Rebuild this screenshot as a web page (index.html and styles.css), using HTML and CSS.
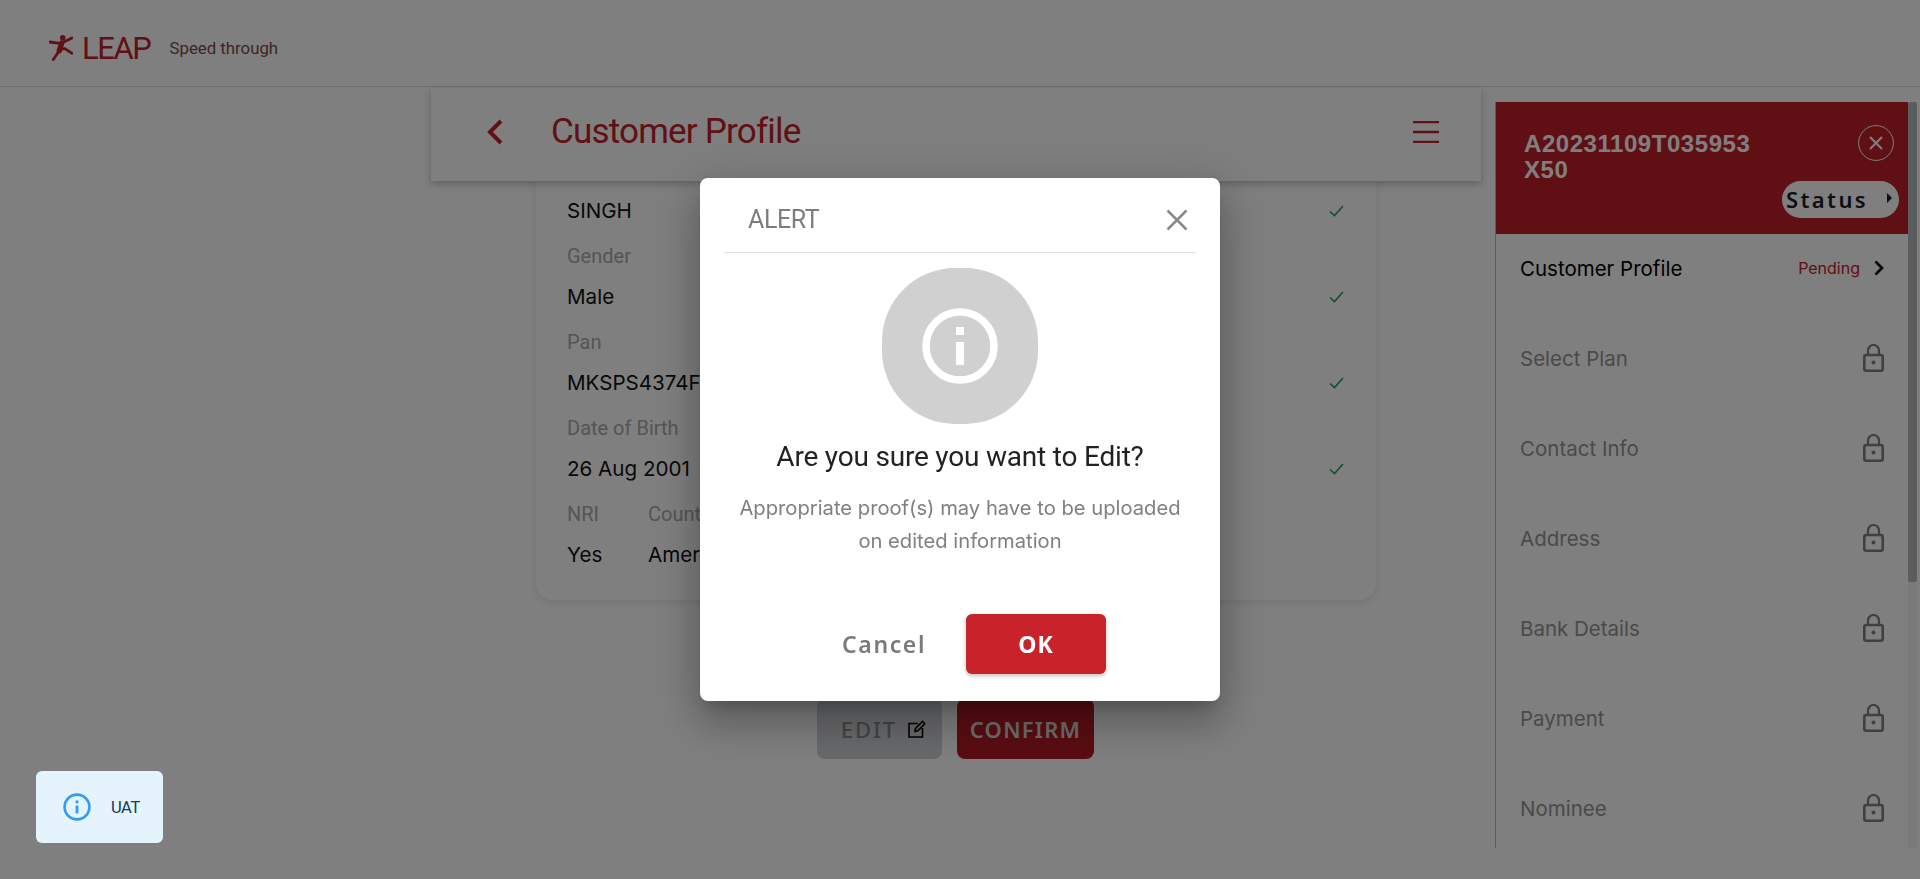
FILE: index.html
```html
<!DOCTYPE html>
<html lang="en">
<head>
  <meta charset="UTF-8" />
  <meta name="viewport" content="width=device-width, initial-scale=1.0" />
  <title>LEAP - Customer Profile</title>
  <link rel="stylesheet" href="styles.css">
</head>
<body>
  <header class="topbar">
    <svg class="logo-icon" viewBox="0 0 24 26" width="24" height="26">
      <circle cx="13.7" cy="2.8" r="2.8" fill="#c4202b"/>
      <path d="M1 7 L11 8.3 M12.7 8 L23 3 M10.3 14 L16 13.7 L23 18.3 M10.3 15.7 L4.3 24.5" fill="none" stroke="#c4202b" stroke-width="2.8" stroke-linecap="round" stroke-linejoin="round"/>
      <path d="M12.7 8 L10.3 15.7" fill="none" stroke="#c4202b" stroke-width="5.4" stroke-linecap="round"/>
    </svg>
    <span class="logo-text">LEAP</span>
    <span class="tagline">Speed through</span>
  </header>

  <div class="layout">
    <main class="content">
      <div class="subheader">
        <svg class="back" viewBox="0 0 16 26" width="16" height="26"><path d="M14 2 L3 13 L14 24" fill="none" stroke="#c4202b" stroke-width="4"/></svg>
        <h1>Customer Profile</h1>
        <svg class="burger" viewBox="0 0 26 22" width="26" height="22"><path d="M0 1 H26 M0 11 H26 M0 21 H26" stroke="#c4202b" stroke-width="2.4"/></svg>
      </div>

      <section class="card">
        <div class="field">
          <div class="value">SINGH</div>
          <svg class="check" viewBox="0 0 15 12" width="15" height="12"><path d="M1 6.5 L5.5 10.5 L14 1" fill="none" stroke="#2a9d5c" stroke-width="1.6"/></svg>
        </div>
        <div class="label">Gender</div>
        <div class="field">
          <div class="value">Male</div>
          <svg class="check" viewBox="0 0 15 12" width="15" height="12"><path d="M1 6.5 L5.5 10.5 L14 1" fill="none" stroke="#2a9d5c" stroke-width="1.6"/></svg>
        </div>
        <div class="label">Pan</div>
        <div class="field">
          <div class="value">MKSPS4374F</div>
          <svg class="check" viewBox="0 0 15 12" width="15" height="12"><path d="M1 6.5 L5.5 10.5 L14 1" fill="none" stroke="#2a9d5c" stroke-width="1.6"/></svg>
        </div>
        <div class="label">Date of Birth</div>
        <div class="field">
          <div class="value">26 Aug 2001</div>
          <svg class="check" viewBox="0 0 15 12" width="15" height="12"><path d="M1 6.5 L5.5 10.5 L14 1" fill="none" stroke="#2a9d5c" stroke-width="1.6"/></svg>
        </div>
        <div class="pair">
          <div class="pair-col">
            <div class="label">NRI</div>
            <div class="value">Yes</div>
          </div>
          <div>
            <div class="label">Country</div>
            <div class="value">America</div>
          </div>
        </div>
      </section>

      <div class="actions">
        <button class="btn-edit">EDIT
          <svg viewBox="0 0 18 18" width="18" height="18"><path d="M10 3.5 H1 V17 H14.5 V8 M7 11.5 L7.5 8.5 L14.5 1.5 L16.8 3.8 L9.8 10.8 Z" fill="none" stroke="#000" stroke-width="1.6"/></svg>
        </button>
        <button class="btn-confirm">CONFIRM</button>
      </div>
    </main>

    <aside class="side">
      <div class="side-head">
        <div class="app-id">A20231109T035953<br>X50</div>
        <svg class="side-close" viewBox="0 0 36 36" width="36" height="36"><circle cx="18" cy="18" r="17.4" fill="none" stroke="#fff" stroke-width="1"/><path d="M12 12 L24 24 M24 12 L12 24" stroke="#fff" stroke-width="2"/></svg>
        <div class="status">Status <i class="status-arrow"></i></div>
      </div>
      <ul class="steps">
        <li class="step active">
          <span>Customer Profile</span>
          <span class="pending">Pending</span>
          <svg viewBox="0 0 10 16" width="10" height="16"><path d="M1.5 1.5 L8 8 L1.5 14.5" fill="none" stroke="#000" stroke-width="2.6"/></svg>
        </li>
        <li class="step"><span>Select Plan</span><svg class="lock" viewBox="0 0 21 28" width="21" height="28"><use href="#lock"/></svg></li>
        <li class="step"><span>Contact Info</span><svg class="lock" viewBox="0 0 21 28" width="21" height="28"><use href="#lock"/></svg></li>
        <li class="step"><span>Address</span><svg class="lock" viewBox="0 0 21 28" width="21" height="28"><use href="#lock"/></svg></li>
        <li class="step"><span>Bank Details</span><svg class="lock" viewBox="0 0 21 28" width="21" height="28"><use href="#lock"/></svg></li>
        <li class="step"><span>Payment</span><svg class="lock" viewBox="0 0 21 28" width="21" height="28"><use href="#lock"/></svg></li>
        <li class="step"><span>Nominee</span><svg class="lock" viewBox="0 0 21 28" width="21" height="28"><use href="#lock"/></svg></li>
      </ul>
      <div class="scroll-track"><div class="scroll-thumb"></div></div>
    </aside>
  </div>

  <svg width="0" height="0" class="defs">
    <symbol id="lock" viewBox="0 0 21 28">
      <path d="M5 11 V6.5 a5.5 5.5 0 0 1 11 0 V11" fill="none" stroke="#808080" stroke-width="2.2"/>
      <rect x="1.3" y="11" width="18.4" height="15.7" rx="2" fill="none" stroke="#808080" stroke-width="2.6"/>
      <circle cx="10.5" cy="18.5" r="2" fill="#808080"/>
    </symbol>
  </svg>

  <div class="overlay"></div>

  <div class="modal">
    <div class="modal-head">
      <span class="modal-title">ALERT</span>
      <svg viewBox="0 0 22 22" width="22" height="22"><path d="M1.5 1.5 L20.5 20.5 M20.5 1.5 L1.5 20.5" stroke="#8a8a8a" stroke-width="2.6"/></svg>
    </div>
    <div class="blob">
      <svg viewBox="0 0 76 76" width="76" height="76">
        <circle cx="38" cy="38" r="34" fill="none" stroke="#fff" stroke-width="7.5"/>
        <rect x="34" y="19" width="8" height="8" fill="#fff"/>
        <rect x="34" y="34" width="8" height="23" fill="#fff"/>
      </svg>
    </div>
    <h2>Are you sure you want to Edit?</h2>
    <p>Appropriate proof(s) may have to be uploaded<br>on edited information</p>
    <div class="modal-actions">
      <button class="btn-cancel">Cancel</button>
      <button class="btn-ok">OK</button>
    </div>
  </div>

  <div class="toast">
    <svg viewBox="0 0 28 28" width="28" height="28">
      <circle cx="14" cy="14" r="12.4" fill="none" stroke="#2f9df4" stroke-width="2.6"/>
      <rect x="12.6" y="7.5" width="2.8" height="2.8" fill="#2f9df4"/>
      <rect x="12.6" y="12.5" width="2.8" height="8" fill="#2f9df4"/>
    </svg>
    <span>UAT</span>
  </div>
</body>
</html>
```

FILE: styles.css
```css
body {
  margin: 0;
  height: 879px;
  overflow: hidden;
  background: #fff;
  font-family: "Inter", "Liberation Sans", sans-serif;
  color: #111;
}
.topbar {
  height: 76px;
  padding: 10px 0 0 49px;
  border-bottom: 1px solid #e2e2e2;
  display: flex;
  align-items: center;
}
.logo-text {
  font-family: "Roboto", sans-serif;
  font-size: 31px;
  color: #c4202b;
  margin-left: 9px;
  letter-spacing: -1.4px;
}
.tagline {
  font-family: "Roboto", sans-serif;
  font-size: 16.8px;
  color: #7a4a4e;
  margin-left: 19px;
}
.layout {
  display: flex;
}
.content {
  margin-left: 431px;
  width: 1050px;
  flex: none;
}
.subheader {
  position: relative;
  z-index: 2;
  height: 87px;
  margin-top: 1px;
  display: flex;
  align-items: center;
  padding: 0 42px 6px 56px;
  background: #fff;
  box-shadow: 0 3px 8px rgba(0,0,0,0.25);
}
.subheader h1 {
  margin: 0 0 0 48px;
  flex: 1;
  font-family: "Roboto", sans-serif;
  font-weight: 400;
  font-size: 35px;
  letter-spacing: -0.8px;
  color: #c4202b;
}
.card {
  margin: 0 105px;
  height: 419px;
  box-sizing: border-box;
  padding: 14px 32px 0 31px;
  background: #fff;
  border-radius: 0 0 16px 16px;
  box-shadow: 0 2px 10px rgba(0,0,0,0.1);
}
.field {
  display: flex;
  justify-content: space-between;
  align-items: center;
}
.label {
  font-family: "Roboto", sans-serif;
  font-size: 20px;
  line-height: 26px;
  margin-top: 16px;
  margin-bottom: 12px;
  color: #aaa;
}
.value {
  font-size: 20.6px;
  line-height: 32px;
}
.pair {
  display: flex;
}
.pair-col {
  width: 81px;
}
.actions {
  display: flex;
  gap: 15px;
  margin-left: 386px;
  margin-top: 99px;
}
button {
  border: 0;
  font-family: "Noto Sans", sans-serif;
}
.actions button {
  height: 60px;
  border-radius: 8px;
  font-size: 22px;
  letter-spacing: 2px;
  font-weight: 500;
}
.btn-edit {
  width: 125px;
  padding: 0 0 0 8px;
  background: #d0d3d6;
  color: #8a8a8a;
  display: flex;
  align-items: center;
  justify-content: center;
  gap: 11px;
}
.btn-confirm {
  width: 137px;
  padding: 0;
  background: #b41a24;
  color: #ddd;
}
.actions .btn-confirm {
  font-weight: 600;
  letter-spacing: 1.2px;
}
.side {
  position: relative;
  margin: 15px 0 0 14px;
  width: 421px;
  height: 746px;
  overflow: hidden;
  border-left: 1px solid #bbb;
  background: #fff;
}
.side-head {
  position: relative;
  width: 412px;
  height: 132px;
  background: #c02028;
}
.app-id {
  position: absolute;
  left: 28px;
  top: 29px;
  width: 240px;
  font-family: "Liberation Sans", sans-serif;
  font-weight: bold;
  font-size: 24px;
  line-height: 26px;
  letter-spacing: 0.55px;
  color: #fff;
}
.side-close {
  position: absolute;
  left: 362px;
  top: 23px;
}
.status {
  position: absolute;
  left: 286px;
  top: 79px;
  width: 117px;
  height: 37px;
  box-sizing: border-box;
  padding-left: 4px;
  border-radius: 19px;
  background: #fff;
  font-family: "Noto Sans", sans-serif;
  font-weight: 600;
  font-size: 22px;
  line-height: 36px;
  letter-spacing: 2.4px;
  color: #16202a;
}
.status-arrow {
  position: absolute;
  right: 7px;
  top: 12px;
  border-left: 5px solid #16202a;
  border-top: 5px solid transparent;
  border-bottom: 5px solid transparent;
}
.steps {
  list-style: none;
  margin: 0;
  padding: 0;
  width: 412px;
}
.step {
  display: flex;
  align-items: center;
  justify-content: space-between;
  height: 90px;
  padding: 0 24px;
  box-sizing: border-box;
  font-size: 20.5px;
  color: #949494;
  position: relative;
  top: -11px;
}
.step.active {
  color: #000;
}
.pending {
  margin-left: auto;
  margin-right: 14px;
  font-size: 16px;
  color: #c4202b;
}
.scroll-track {
  position: absolute;
  left: 412px;
  top: 0;
  width: 9px;
  height: 100%;
  background: #f4f4f4;
}
.scroll-thumb {
  height: 480px;
  background: #b4b8bb;
  border-radius: 2px;
}
.defs {
  position: absolute;
}
.overlay {
  position: fixed;
  inset: 0;
  z-index: 10;
  background: rgba(0,0,0,0.5);
}
.modal {
  position: fixed;
  z-index: 30;
  left: 700px;
  top: 178px;
  width: 520px;
  height: 523px;
  box-sizing: border-box;
  padding: 0 24px;
  background: #fff;
  border-radius: 8px;
  box-shadow: 0 11px 15px -7px rgba(0,0,0,0.2), 0 24px 38px 3px rgba(0,0,0,0.16), 0 9px 46px 8px rgba(0,0,0,0.14);
  text-align: center;
}
.modal-head {
  height: 75px;
  box-sizing: border-box;
  display: flex;
  align-items: center;
  justify-content: space-between;
  padding: 9px 8px 0 24px;
  border-bottom: 1px solid #ddd;
}
.modal-title {
  font-family: "Roboto", sans-serif;
  font-size: 25px;
  letter-spacing: -0.4px;
  color: #7d7d7d;
}
.blob {
  width: 156px;
  height: 156px;
  margin: 15px auto 0;
  border-radius: 47%;
  background: #d0d0d0;
  display: flex;
  align-items: center;
  justify-content: center;
}
.modal h2 {
  margin: 16px 0 0;
  font-family: "Roboto", sans-serif;
  font-weight: 400;
  font-size: 28px;
  line-height: 34px;
  letter-spacing: -0.2px;
  color: #222;
}
.modal p {
  margin: 17px 0 0;
  font-size: 20.2px;
  line-height: 33px;
  color: #808080;
}
.modal-actions {
  display: flex;
  align-items: center;
  justify-content: flex-end;
  gap: 40px;
  margin-top: 57px;
  padding-right: 90px;
}
.btn-cancel {
  background: none;
  padding: 0;
  font-size: 23px;
  font-weight: 600;
  letter-spacing: 1.6px;
  color: #7b7b7b;
}
.btn-ok {
  width: 140px;
  height: 60px;
  padding: 0;
  border-radius: 6px;
  background: #c8222a;
  color: #fff;
  font-size: 23px;
  font-weight: 700;
  letter-spacing: 1px;
  box-shadow: 0 2px 4px rgba(0,0,0,0.25);
}
.toast {
  position: fixed;
  z-index: 20;
  left: 36px;
  top: 771px;
  width: 127px;
  height: 72px;
  box-sizing: border-box;
  padding-left: 27px;
  display: flex;
  align-items: center;
  gap: 20px;
  border-radius: 6px;
  background: #e5f3fd;
  font-family: "Roboto", sans-serif;
  font-size: 16.5px;
  letter-spacing: -0.4px;
  color: #0d3c61;
}
```
